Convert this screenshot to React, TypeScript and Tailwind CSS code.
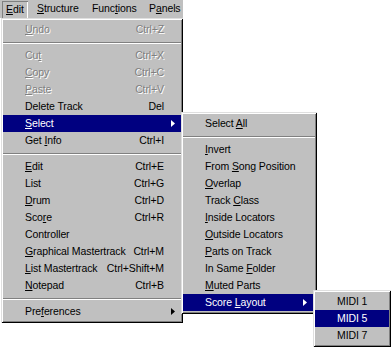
import type { ReactNode } from 'react'

type Item =
  | { sep: true }
  | {
      sep?: false
      label: string
      key?: number
      shortcut?: string
      disabled?: boolean
      active?: boolean
      sub?: boolean
    }

const FONT = "font-['Liberation_Sans',Arial,sans-serif]"
const RAISED =
  'bg-[#c0c0c0] shadow-[inset_1px_1px_0_#dfdfdf,inset_-1px_-1px_0_#000,inset_2px_2px_0_#fff,inset_-2px_-2px_0_#808080]'

const EDIT_MENU: Item[] = [
  { label: 'Undo', key: 0, shortcut: 'Ctrl+Z', disabled: true },
  { sep: true },
  { label: 'Cut', key: 2, shortcut: 'Ctrl+X', disabled: true },
  { label: 'Copy', key: 0, shortcut: 'Ctrl+C', disabled: true },
  { label: 'Paste', key: 0, shortcut: 'Ctrl+V', disabled: true },
  { label: 'Delete Track', shortcut: 'Del' },
  { label: 'Select', key: 0, active: true, sub: true },
  { label: 'Get Info', key: 4, shortcut: 'Ctrl+I' },
  { sep: true },
  { label: 'Edit', key: 0, shortcut: 'Ctrl+E' },
  { label: 'List', shortcut: 'Ctrl+G' },
  { label: 'Drum', key: 0, shortcut: 'Ctrl+D' },
  { label: 'Score', key: 3, shortcut: 'Ctrl+R' },
  { label: 'Controller' },
  { label: 'Graphical Mastertrack', key: 0, shortcut: 'Ctrl+M' },
  { label: 'List Mastertrack', key: 0, shortcut: 'Ctrl+Shift+M' },
  { label: 'Notepad', key: 0, shortcut: 'Ctrl+B' },
  { sep: true },
  { label: 'Preferences', key: 3, sub: true },
]

const SELECT_MENU: Item[] = [
  { label: 'Select All', key: 7 },
  { sep: true },
  { label: 'Invert', key: 0 },
  { label: 'From Song Position', key: 5 },
  { label: 'Overlap', key: 0 },
  { label: 'Track Class', key: 6 },
  { label: 'Inside Locators', key: 0 },
  { label: 'Outside Locators', key: 0 },
  { label: 'Parts on Track', key: 0 },
  { label: 'In Same Folder', key: 8 },
  { label: 'Muted Parts', key: 0 },
  { label: 'Score Layout', key: 6, active: true, sub: true },
]

const LAYOUT_MENU: Item[] = [
  { label: 'MIDI 1' },
  { label: 'MIDI 5', active: true },
  { label: 'MIDI 7' },
]

function Mnemonic({ text, at }: { text: string; at?: number }) {
  if (at === undefined) return <>{text}</>
  return (
    <>
      {text.slice(0, at)}
      <u className="underline underline-offset-[1px]">{text[at]}</u>
      {text.slice(at + 1)}
    </>
  )
}

function Arrow({ light }: { light?: boolean }) {
  return (
    <svg width="4" height="7" viewBox="0 0 4 7" className={light ? 'text-white' : 'text-black'}>
      <path d="M0 0L4 3.5L0 7Z" fill="currentColor" />
    </svg>
  )
}

function MenuRows({ items, arrowRight }: { items: Item[]; arrowRight: string }) {
  return (
    <>
      {items.map((it, i) => {
        if (it.sep) {
          return (
            <div key={i} className="flex h-[9px] flex-col justify-center">
              <div className="h-px bg-[#808080]" />
              <div className="h-px bg-white" />
            </div>
          )
        }
        const color = it.active
          ? 'bg-[#000080] text-white'
          : it.disabled
            ? 'text-[#808080] [text-shadow:1px_1px_0_#fff]'
            : 'text-black'
        return (
          <div key={i} className={`relative flex h-[17px] items-center pl-[22px] ${color}`}>
            <span className="whitespace-nowrap">
              <Mnemonic text={it.label} at={it.key} />
            </span>
            {it.shortcut && (
              <span className="ml-auto whitespace-nowrap pl-[4px] pr-[17px]">{it.shortcut}</span>
            )}
            {it.sub && (
              <span className={`absolute top-[5px] ${arrowRight}`}>
                <Arrow light={it.active} />
              </span>
            )}
          </div>
        )
      })}
    </>
  )
}

function Popup({ className, children }: { className: string; children: ReactNode }) {
  return <div className={`absolute px-[2px] py-[3px] ${RAISED} ${className}`}>{children}</div>
}

function MenuBar() {
  const cell = 'flex h-[18px] items-center'
  return (
    <div className="flex h-[18px] w-[183px] bg-[#c0c0c0] text-black">
      <div className={`${cell} ml-[2px] mt-[1px] h-[16px] w-[26px] pl-[4px] shadow-[inset_1px_1px_0_#808080,inset_-1px_-1px_0_#fff]`}>
        <Mnemonic text="Edit" at={0} />
      </div>
      <div className={`${cell} w-[62px] pl-[9px]`}>
        <Mnemonic text="Structure" at={0} />
      </div>
      <div className={`${cell} w-[57px] pl-[2px]`}>
        <Mnemonic text="Functions" at={4} />
      </div>
      <div className={`${cell} pl-[2px]`}>
        <Mnemonic text="Panels" at={1} />
      </div>
    </div>
  )
}

export default function App() {
  return (
    <div className={`relative h-[347px] w-[392px] overflow-hidden bg-white text-[10.5px] tracking-[-0.1px] ${FONT}`}>
      <MenuBar />

      <Popup className="left-[1px] top-[18px] w-[182px]">
        <MenuRows items={EDIT_MENU} arrowRight="right-[6px]" />
      </Popup>

      <Popup className="left-[181px] top-[112px] w-[136px]">
        <MenuRows items={SELECT_MENU} arrowRight="right-[8px]" />
      </Popup>

      <Popup className="left-[313px] top-[290px] w-[78px]">
        <MenuRows items={LAYOUT_MENU} arrowRight="right-[6px]" />
      </Popup>
    </div>
  )
}
